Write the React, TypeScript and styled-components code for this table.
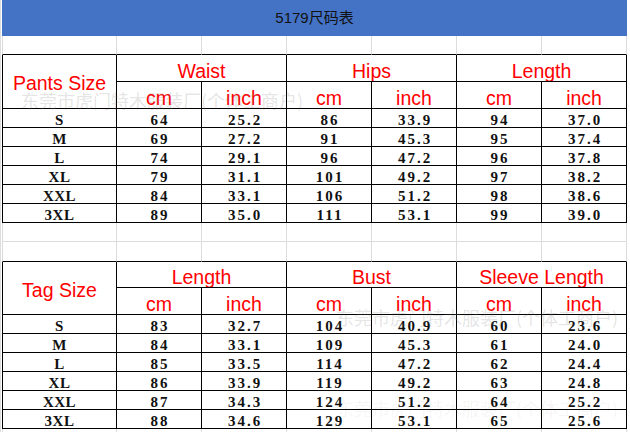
import styled, { createGlobalStyle } from "styled-components";

const GlobalStyle = createGlobalStyle`
  html, body {
    margin: 0;
    padding: 0;
    background: #fff;
  }
  body {
    width: 630px;
    height: 432px;
    overflow: hidden;
  }
`;

const pants = [
  ["S", "64", "25.2", "86", "33.9", "94", "37.0"],
  ["M", "69", "27.2", "91", "45.3", "95", "37.4"],
  ["L", "74", "29.1", "96", "47.2", "96", "37.8"],
  ["XL", "79", "31.1", "101", "49.2", "97", "38.2"],
  ["XXL", "84", "33.1", "106", "51.2", "98", "38.6"],
  ["3XL", "89", "35.0", "111", "53.1", "99", "39.0"],
];

const tops = [
  ["S", "83", "32.7", "104", "40.9", "60", "23.6"],
  ["M", "84", "33.1", "109", "45.3", "61", "24.0"],
  ["L", "85", "33.5", "114", "47.2", "62", "24.4"],
  ["XL", "86", "33.9", "119", "49.2", "63", "24.8"],
  ["XXL", "87", "34.3", "124", "51.2", "64", "25.2"],
  ["3XL", "88", "34.6", "129", "53.1", "65", "25.6"],
];

const WATERMARK = "东莞市虎门特木服装厂(个体工商户)";

export default function App() {
  return (
    <Page>
      <GlobalStyle />
      <Sheet>
        <colgroup>
          <col style={{ width: 115 }} />
          {[0, 1, 2, 3, 4, 5].map((i) => (
            <col key={i} style={{ width: 85 }} />
          ))}
        </colgroup>
        <tbody>
          <Row $h={36}>
            <TitleCell colSpan={7}>5179尺码表</TitleCell>
          </Row>
          <BlankRow h={19} edge />
          <SizeTable
            label="Pants Size"
            groups={["Waist", "Hips", "Length"]}
            rows={pants}
            top={27}
          />
          <BlankRow h={19} />
          <BlankRow h={20} edge />
          <SizeTable
            label="Tag Size"
            groups={["Length", "Bust", "Sleeve Length"]}
            rows={tops}
            top={26}
          />
          <BlankRow h={10} />
        </tbody>
      </Sheet>
      <Watermark $x={20} $y={90} $fade={0.2}>
        {WATERMARK}
      </Watermark>
      <Watermark $x={335} $y={307} $fade={0.2}>
        {WATERMARK}
      </Watermark>
      <Watermark $x={335} $y={398} $fade={0.07}>
        {WATERMARK}
      </Watermark>
    </Page>
  );
}

function BlankRow({ h, edge }: { h: number; edge?: boolean }) {
  return (
    <Row $h={h}>
      {[0, 1, 2, 3, 4, 5, 6].map((i) => (
        <GridCell key={i} $first={i === 0} $edge={edge} />
      ))}
    </Row>
  );
}

function SizeTable({
  label,
  groups,
  rows,
  top,
}: {
  label: string;
  groups: string[];
  rows: string[][];
  top: number;
}) {
  return (
    <>
      <Row $h={top}>
        <LabelCell rowSpan={2} $first>
          {label}
        </LabelCell>
        {groups.map((g) => (
          <HeadCell key={g} colSpan={2}>
            {g}
          </HeadCell>
        ))}
      </Row>
      <Row $h={27}>
        {groups.map((g) => [
          <HeadCell key={g + "cm"}>cm</HeadCell>,
          <HeadCell key={g + "in"}>inch</HeadCell>,
        ])}
      </Row>
      {rows.map((r) => (
        <Row $h={19} key={r[0]}>
          {r.map((v, i) => (
            <DataCell key={i} $first={i === 0}>
              {v}
            </DataCell>
          ))}
        </Row>
      ))}
    </>
  );
}

const Page = styled.div`
  position: relative;
  width: 629px;
  height: 432px;
  padding-left: 1px;
  border-left: 1px solid #dedede;
  overflow: hidden;
`;

const Sheet = styled.table`
  border-collapse: separate;
  border-spacing: 0;
  table-layout: fixed;
  width: 625px;
`;

const Row = styled.tr<{ $h: number }>`
  height: ${(p) => p.$h}px;
`;

const TitleCell = styled.td`
  padding: 0;
  background: #4472c4;
  color: #111;
  text-align: center;
  vertical-align: middle;
  font-family: "Liberation Sans", "Noto Sans CJK SC", sans-serif;
  font-size: 15px;
  line-height: 18px;
`;

const GridCell = styled.td<{ $first?: boolean; $edge?: boolean }>`
  padding: 0;
  border-right: 1px solid #dcdcdc;
  border-bottom: 1px solid ${(p) => (p.$edge ? "#000" : "#dcdcdc")};
  border-left: ${(p) => (p.$first ? "1px solid #dcdcdc" : "none")};
`;

const Cell = styled.td<{ $first?: boolean }>`
  padding: 0;
  border-right: 1px solid #000;
  border-bottom: 1px solid #000;
  border-left: ${(p) => (p.$first ? "1px solid #000" : "none")};
  text-align: center;
  white-space: nowrap;
  overflow: hidden;
`;

const HeadCell = styled(Cell)`
  color: #ff0000;
  font-family: "Liberation Sans", "Noto Sans", sans-serif;
  font-size: 19.5px;
  line-height: 20px;
  vertical-align: bottom;
`;

const LabelCell = styled(HeadCell)`
  vertical-align: middle;
  padding-top: 3px;
`;

const DataCell = styled(Cell)`
  color: #111;
  font-family: "Liberation Serif", serif;
  font-weight: 700;
  font-size: 15px;
  line-height: 13px;
  letter-spacing: ${(p) => (p.$first ? 0.5 : 2)}px;
  padding-left: ${(p) => (p.$first ? 0 : 2)}px;
  vertical-align: bottom;
`;

const Watermark = styled.div<{ $x: number; $y: number; $fade: number }>`
  position: absolute;
  left: ${(p) => p.$x}px;
  top: ${(p) => p.$y}px;
  font-family: "Noto Sans CJK SC", sans-serif;
  font-size: 18px;
  line-height: 20px;
  white-space: nowrap;
  color: rgba(120, 120, 120, ${(p) => p.$fade});
  pointer-events: none;
`;
